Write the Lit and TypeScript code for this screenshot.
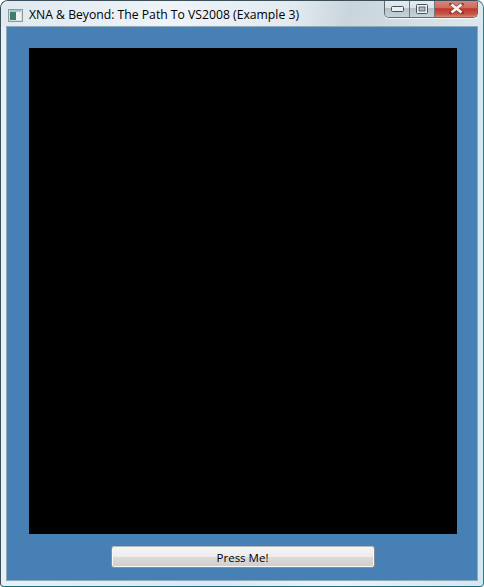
import { LitElement, html, css } from "lit";
import { customElement } from "lit/decorators.js";

@customElement("app-root")
export class AppRoot extends LitElement {
  static styles = css`
    :host {
      display: block;
      width: 484px;
      height: 587px;
      background: #fff;
      font-family: "Open Sans", "Noto Sans", sans-serif;
    }
    .window {
      position: relative;
      box-sizing: border-box;
      width: 484px;
      height: 587px;
      display: flex;
      flex-direction: column;
      border-radius: 8px 8px 4px 4px;
      border: 1px solid #3c4f58;
      border-bottom-color: #1d6f78;
      border-right-color: #2b7f8a;
      overflow: hidden;
      background: linear-gradient(90deg, #e6f1f8 0, #d9e9f4 45%, #e9f3fa 70%, #d6e6f1 100%);
    }
    .titlebar {
      height: 26px;
      display: flex;
      align-items: flex-start;
      padding-left: 7px;
      background: linear-gradient(100deg, #dfe9f0 0, #eef4f8 35%, #e2ebf1 60%, #c9d5dc 72%, #dde7ee 100%);
    }
    .app-icon {
      width: 15px;
      height: 13px;
      margin-top: 8px;
      flex: none;
    }
    .title {
      margin: 4px 0 0 6px;
      font-size: 12.2px;
      line-height: 20px;
      color: #000;
      white-space: nowrap;
    }
    .controls {
      margin-left: auto;
      margin-right: 5px;
      margin-top: -1px;
      width: 94px;
      height: 18px;
      flex: none;
      display: flex;
      box-sizing: border-box;
      border: 1px solid #5d6a72;
      border-top: none;
      border-radius: 0 0 5px 5px;
      overflow: hidden;
      box-shadow: 0 1px 0 rgba(255, 255, 255, 0.8);
    }
    .ctl {
      display: flex;
      align-items: center;
      justify-content: center;
      box-sizing: border-box;
      background: linear-gradient(#e4ebf0 0, #dbe4ea 45%, #b7c3cb 50%, #c6d2d9 100%);
    }
    .ctl.min {
      width: 25px;
      border-right: 1px solid #6d7a82;
    }
    .ctl.max {
      width: 25px;
      border-right: 1px solid #6d7a82;
    }
    .ctl.close {
      flex: 1;
      background: linear-gradient(#d98a7e 0, #cf6b5e 45%, #b9382b 52%, #c9594a 85%, #d98d78 100%);
    }
    .ctl svg {
      display: block;
    }
    .client {
      flex: 1;
      margin: 0 6px 6px 6px;
      display: flex;
      flex-direction: column;
      align-items: center;
      box-sizing: border-box;
      background: #4680b5;
      padding: 21px 20px 0 21px;
      box-shadow: 0 0 0 1px #8fa9bb;
    }
    .viewport {
      width: 428px;
      height: 486px;
      flex: none;
      background: #000;
    }
    button {
      margin-top: 12px;
      width: 264px;
      height: 22px;
      flex: none;
      padding: 0;
      box-sizing: border-box;
      font-family: inherit;
      font-size: 11.5px;
      color: #000;
      border: 1px solid #8a8d8f;
      border-top-color: #b5b8ba;
      border-radius: 3px;
      background: linear-gradient(#f4f4f4 0, #ededed 48%, #dcdbda 52%, #cfcdcc 100%);
      box-shadow: inset 0 0 0 1px #f7f7f7;
    }
  `;

  render() {
    return html`
      <div class="window">
        <div class="titlebar">
          <svg class="app-icon" viewBox="0 0 15 13">
            <rect x="0" y="0" width="15" height="13" fill="#d4dfe6" />
            <rect x="0.5" y="0.5" width="14" height="12" fill="none" stroke="#8a98a2" />
            <rect x="2" y="3" width="6" height="8" fill="#3f7f68" />
            <rect x="8" y="3" width="5" height="8" fill="#eef3f4" />
            <rect x="2" y="1" width="11" height="2" fill="#a9c4d8" />
          </svg>
          <div class="title">XNA &amp; Beyond: The Path To VS2008 (Example 3)</div>
          <div class="controls">
            <div class="ctl min">
              <svg width="13" height="6" viewBox="0 0 13 6">
                <rect x="0.5" y="0.5" width="12" height="5" rx="1" fill="#e9eef1" stroke="#46525a" />
              </svg>
            </div>
            <div class="ctl max">
              <svg width="12" height="10" viewBox="0 0 12 10">
                <rect x="0.5" y="0.5" width="11" height="9" rx="1" fill="#eef2f4" stroke="#46525a" />
                <rect x="3" y="3" width="6" height="4" fill="#aeb9c0" stroke="#46525a" stroke-width="0.8" />
              </svg>
            </div>
            <div class="ctl close">
              <svg width="15" height="11" viewBox="0 0 15 11">
                <path d="M2 1 L13 10 M13 1 L2 10" stroke="#4a2a26" stroke-width="4" stroke-linecap="round" opacity="0.55" />
                <path d="M2.5 1.5 L12.5 9.5 M12.5 1.5 L2.5 9.5" stroke="#f4f0ee" stroke-width="2.8" />
              </svg>
            </div>
          </div>
        </div>
        <div class="client">
          <div class="viewport"></div>
          <button>Press Me!</button>
        </div>
      </div>
    `;
  }
}
